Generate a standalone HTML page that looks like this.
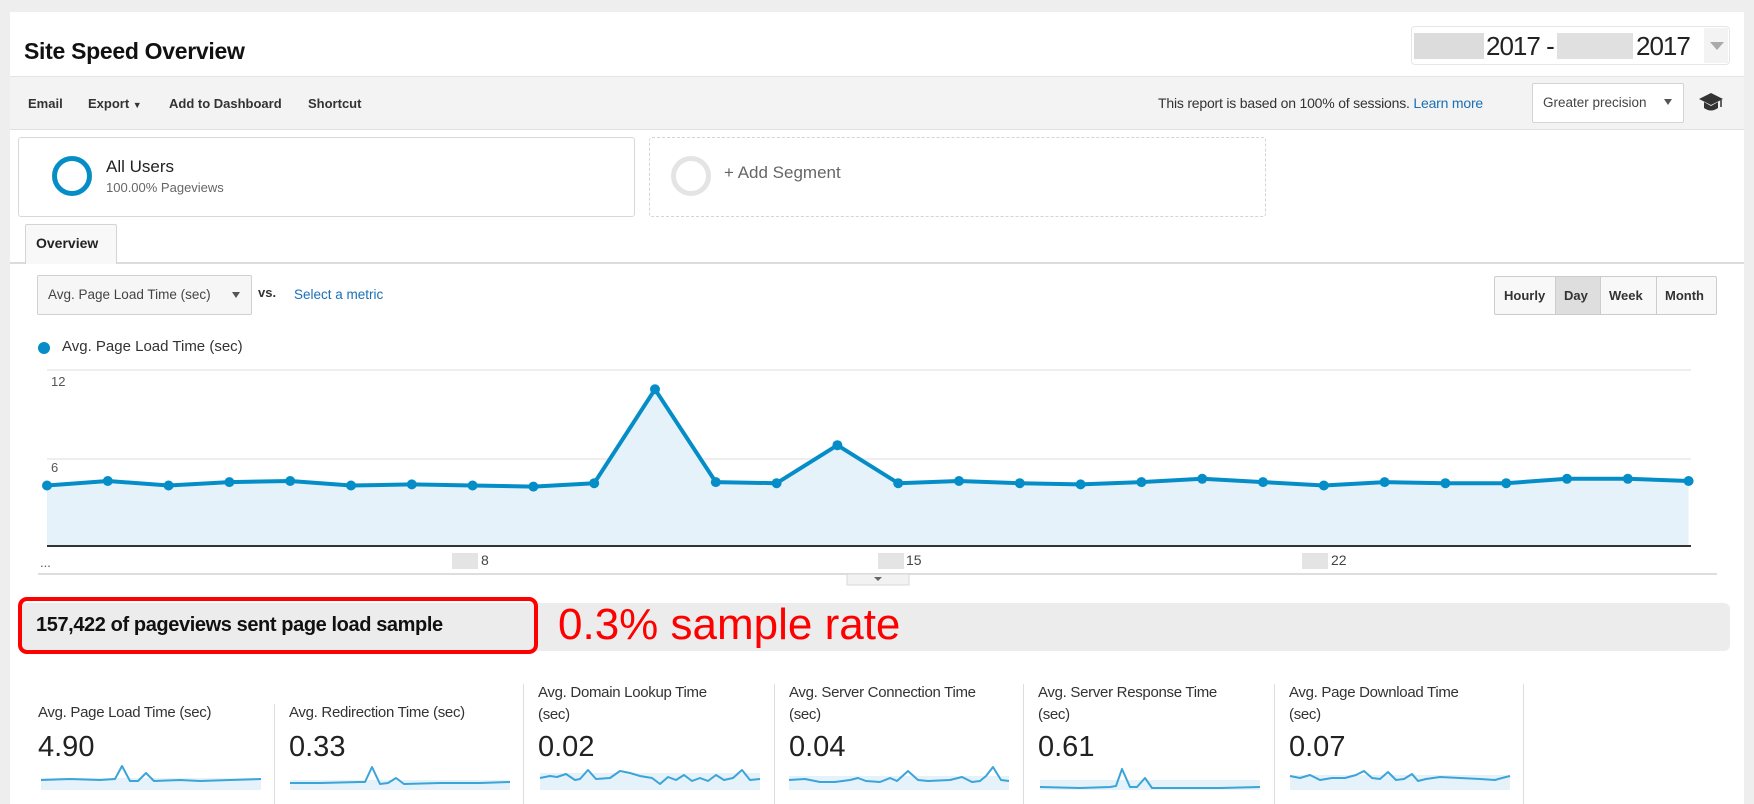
<!DOCTYPE html>
<html><head><meta charset="utf-8"><style>
*{margin:0;padding:0;box-sizing:border-box}
html,body{width:1754px;height:804px;overflow:hidden}
body{background:#eeeeee;font-family:"Liberation Sans",Arial,sans-serif;color:#222;position:relative}
.a{position:absolute;white-space:nowrap}
.panel{position:absolute;left:10px;top:12px;width:1734px;height:792px;background:#fff}
.tb{position:absolute;left:10px;top:76px;width:1734px;height:54px;background:#f3f3f3;border-top:1px solid #e4e4e4;border-bottom:1px solid #e0e0e0}
.ti{font-size:13px;font-weight:bold;color:#333;top:96px}
.lbl{font-size:15px;color:#333;line-height:22px;letter-spacing:-0.3px}
.val{font-size:29px;color:#222;top:731px}
.div{position:absolute;width:1px;background:#ddd;top:684px;height:120px}
</style></head><body>
<div class="panel"></div>
<div class="a" style="left:24px;top:38px;font-size:23px;font-weight:bold;color:#111;letter-spacing:-0.3px">Site Speed Overview</div>

<!-- date box -->
<div class="a" style="left:1411px;top:26px;width:319px;height:39px;border:1px solid #e6e6e6;border-radius:4px;background:#fff"></div>
<div class="a" style="left:1414px;top:33px;width:70px;height:26px;background:#dcdcdc"></div>
<div class="a" style="left:1557px;top:33px;width:76px;height:26px;background:#e0e0e0"></div>
<div class="a" style="left:1486px;top:31px;font-size:26px;color:#222;letter-spacing:-1px">2017 -</div>
<div class="a" style="left:1636px;top:31px;font-size:26px;color:#222;letter-spacing:-1px">2017</div>
<div class="a" style="left:1704px;top:28px;width:24px;height:35px;background:#f3f3f3"></div>
<div class="a" style="left:1710px;top:42px;border-left:7px solid transparent;border-right:7px solid transparent;border-top:8px solid #aaa"></div>

<div class="tb"></div>
<div class="a ti" style="left:28px">Email</div>
<div class="a ti" style="left:88px">Export <span style="font-size:9px">▼</span></div>
<div class="a ti" style="left:169px">Add to Dashboard</div>
<div class="a ti" style="left:308px">Shortcut</div>
<div class="a" style="left:1158px;top:95px;font-size:14px;color:#333;letter-spacing:-0.2px">This report is based on 100% of sessions. <span style="color:#1a6fb5">Learn more</span></div>
<div class="a" style="left:1532px;top:83px;width:152px;height:40px;background:#fff;border:1px solid #d4d4d4;border-radius:2px"></div>
<div class="a" style="left:1543px;top:95px;font-size:13.5px;color:#444">Greater precision</div>
<div class="a" style="left:1664px;top:99px;border-left:4px solid transparent;border-right:4px solid transparent;border-top:6px solid #555"></div>
<svg class="a" style="left:1698px;top:91px" width="26" height="24" viewBox="0 0 26 24"><path d="M1 8 L13 2 L25 8 L13 14Z" fill="#333"/><path d="M6 11 L6 17 Q13 22 20 17 L20 11 L13 15Z" fill="#333"/><path d="M23 9 L23 16" stroke="#333" stroke-width="1.5"/></svg>

<!-- segments -->
<div class="a" style="left:18px;top:137px;width:617px;height:80px;border:1px solid #d8d8d8;border-radius:3px;background:#fff"></div>
<div class="a" style="left:52px;top:156px;width:40px;height:40px;border-radius:50%;border:5px solid #058dc7"></div>
<div class="a" style="left:106px;top:157px;font-size:17px;color:#222">All Users</div>
<div class="a" style="left:106px;top:180px;font-size:13px;color:#666">100.00% Pageviews</div>
<div class="a" style="left:649px;top:137px;width:617px;height:80px;border:1px dashed #d4d4d4;border-radius:3px"></div>
<div class="a" style="left:671px;top:156px;width:40px;height:40px;border-radius:50%;border:5px solid #e4e4e4"></div>
<div class="a" style="left:724px;top:163px;font-size:17px;color:#666">+ Add Segment</div>

<!-- tab -->
<div class="a" style="left:10px;top:262px;width:1734px;height:2px;background:#dcdcdc"></div>
<div class="a" style="left:25px;top:224px;width:92px;height:40px;border:1px solid #d4d4d4;border-bottom:none;background:#f8f8f8;border-radius:2px 2px 0 0"></div>
<div class="a" style="left:36px;top:235px;font-size:14px;font-weight:bold;color:#222">Overview</div>

<!-- metric select -->
<div class="a" style="left:37px;top:275px;width:215px;height:40px;border:1px solid #d0d0d0;border-radius:2px;background:#f6f6f6"></div>
<div class="a" style="left:48px;top:287px;font-size:13.5px;color:#444">Avg. Page Load Time (sec)</div>
<div class="a" style="left:232px;top:292px;border-left:4px solid transparent;border-right:4px solid transparent;border-top:6px solid #555"></div>
<div class="a" style="left:258px;top:285px;font-size:13px;font-weight:bold;color:#333">vs.</div>
<div class="a" style="left:294px;top:287px;font-size:13.5px;color:#1a6fb5">Select a metric</div>

<!-- period buttons -->
<div class="a" style="left:1494px;top:276px;width:223px;height:39px;border:1px solid #ccc;border-radius:2px;background:#f8f8f8"></div>
<div class="a" style="left:1555px;top:277px;width:46px;height:37px;background:#dedede;border-left:1px solid #ccc;border-right:1px solid #ccc"></div>
<div class="a" style="left:1656px;top:277px;width:1px;height:37px;background:#ccc"></div>
<div class="a" style="left:1504px;top:288px;font-size:13px;font-weight:bold;color:#333">Hourly</div>
<div class="a" style="left:1564px;top:288px;font-size:13px;font-weight:bold;color:#333">Day</div>
<div class="a" style="left:1609px;top:288px;font-size:13px;font-weight:bold;color:#333">Week</div>
<div class="a" style="left:1665px;top:288px;font-size:13px;font-weight:bold;color:#333">Month</div>

<!-- legend -->
<div class="a" style="left:38px;top:342px;width:12px;height:12px;border-radius:50%;background:#058dc7"></div>
<div class="a" style="left:62px;top:338px;font-size:15px;color:#333">Avg. Page Load Time (sec)</div>
<div class="a" style="left:51px;top:374px;font-size:13px;color:#555">12</div>
<div class="a" style="left:51px;top:460px;font-size:13px;color:#555">6</div>
<div class="a" style="left:40px;top:555px;font-size:13px;color:#555">...</div>
<div class="a" style="left:452px;top:553px;width:26px;height:16px;background:#e4e4e4"></div>
<div class="a" style="left:481px;top:552px;font-size:14px;color:#444">8</div>
<div class="a" style="left:878px;top:553px;width:26px;height:16px;background:#e4e4e4"></div>
<div class="a" style="left:906px;top:552px;font-size:14px;color:#444">15</div>
<div class="a" style="left:1302px;top:553px;width:26px;height:16px;background:#e4e4e4"></div>
<div class="a" style="left:1331px;top:552px;font-size:14px;color:#444">22</div>

<svg class="a" style="left:0;top:0" width="1754" height="804">
<line x1="47" y1="370" x2="1691" y2="370" stroke="#eee" stroke-width="2"/>
<line x1="47" y1="459" x2="1691" y2="459" stroke="#eee" stroke-width="2"/>
<polygon fill="#e6f2f9" points="47,546 47,485.5 107.8,481 168.6,485.5 229.4,482.1 290.2,481 351,485.5 411.8,484.4 472.6,485.5 533.4,486.6 594.2,483.2 655,389.3 715.8,482.1 776.6,483.2 837.4,445.2 898.2,483.2 959,481 1019.8,483.2 1080.6,484.4 1141.4,482.1 1202.2,478.8 1263,482.1 1323.8,485.5 1384.6,482.1 1445.4,483.2 1506.2,483.2 1567,478.8 1627.8,478.8 1688.6,481 1688.6,546"/>
<polyline fill="none" stroke="#058dc7" stroke-width="4" stroke-linejoin="round" points="47,485.5 107.8,481 168.6,485.5 229.4,482.1 290.2,481 351,485.5 411.8,484.4 472.6,485.5 533.4,486.6 594.2,483.2 655,389.3 715.8,482.1 776.6,483.2 837.4,445.2 898.2,483.2 959,481 1019.8,483.2 1080.6,484.4 1141.4,482.1 1202.2,478.8 1263,482.1 1323.8,485.5 1384.6,482.1 1445.4,483.2 1506.2,483.2 1567,478.8 1627.8,478.8 1688.6,481"/>
<g fill="#058dc7">
<circle cx="47" cy="485.5" r="5"/><circle cx="107.8" cy="481" r="5"/><circle cx="168.6" cy="485.5" r="5"/><circle cx="229.4" cy="482.1" r="5"/><circle cx="290.2" cy="481" r="5"/><circle cx="351" cy="485.5" r="5"/><circle cx="411.8" cy="484.4" r="5"/><circle cx="472.6" cy="485.5" r="5"/><circle cx="533.4" cy="486.6" r="5"/><circle cx="594.2" cy="483.2" r="5"/><circle cx="655" cy="389.3" r="5"/><circle cx="715.8" cy="482.1" r="5"/><circle cx="776.6" cy="483.2" r="5"/><circle cx="837.4" cy="445.2" r="5"/><circle cx="898.2" cy="483.2" r="5"/><circle cx="959" cy="481" r="5"/><circle cx="1019.8" cy="483.2" r="5"/><circle cx="1080.6" cy="484.4" r="5"/><circle cx="1141.4" cy="482.1" r="5"/><circle cx="1202.2" cy="478.8" r="5"/><circle cx="1263" cy="482.1" r="5"/><circle cx="1323.8" cy="485.5" r="5"/><circle cx="1384.6" cy="482.1" r="5"/><circle cx="1445.4" cy="483.2" r="5"/><circle cx="1506.2" cy="483.2" r="5"/><circle cx="1567" cy="478.8" r="5"/><circle cx="1627.8" cy="478.8" r="5"/><circle cx="1688.6" cy="481" r="5"/>
</g>
<line x1="47" y1="546" x2="1691" y2="546" stroke="#333" stroke-width="2"/>
<line x1="38" y1="574" x2="1717" y2="574" stroke="#ddd" stroke-width="2"/>
<rect x="847" y="574" width="62" height="11" fill="#f2f2f2" stroke="#d8d8d8"/>
<path d="M874 577 L882 577 L878 581Z" fill="#666"/>
<!-- sparklines -->
<g fill="#e6f2f9" stroke="none">
<rect x="41" y="778" width="220" height="12"/><rect x="290" y="780" width="220" height="10"/><rect x="540" y="773" width="220" height="17"/><rect x="789" y="776" width="220" height="14"/><rect x="1040" y="780" width="220" height="10"/><rect x="1290" y="775" width="220" height="15"/>
</g>
<g fill="none" stroke="#3ba4d9" stroke-width="2" stroke-linejoin="round">
<polyline points="41,780 70,779 100,780 115,779 122,766 130,781 138,781 146,773 154,781 180,780 200,781 230,780 261,779"/>
<polyline points="290,783 320,783 360,782 365,782 372,767 380,784 388,783 396,778 404,784 440,783 480,783 510,782"/>
<polyline points="540,778 550,776 557,777 566,774 575,780 580,779 588,770 596,779 610,778 620,771 630,773 640,776 652,778 660,784 668,777 676,780 684,775 692,781 700,778 708,781 716,775 724,780 733,778 742,770 750,780 760,779"/>
<polyline points="789,780 805,779 820,782 835,782 850,780 858,778 866,781 880,782 890,778 897,781 908,771 918,780 928,781 950,780 962,777 972,782 980,781 986,776 993,767 1001,780 1009,781"/>
<polyline points="1040,787 1080,788 1110,787 1116,786 1122,769 1130,787 1137,787 1145,778 1152,788 1180,788 1220,788 1260,787"/>
<polyline points="1290,776 1300,778 1310,775 1320,780 1332,778 1345,778 1356,775 1364,771 1372,778 1380,779 1388,772 1396,780 1404,779 1412,774 1418,781 1426,779 1440,777 1460,778 1480,779 1495,780 1502,778 1510,776"/>
</g>
</svg>

<!-- sample bar -->
<div class="a" style="left:18px;top:603px;width:1712px;height:48px;background:#ececec;border-radius:6px"></div>
<div class="a" style="left:18px;top:597px;width:520px;height:57px;border:4px solid #ff0000;border-radius:9px"></div>
<div class="a" style="left:36px;top:614px;font-size:20px;font-weight:bold;color:#111;letter-spacing:-0.4px">157,422 of pageviews sent page load sample</div>
<div class="a" style="left:558px;top:600px;font-size:44px;color:#ff0000">0.3% sample rate</div>

<!-- metric tiles -->
<div class="div" style="left:274px;top:704px;height:100px"></div>
<div class="div" style="left:523px"></div>
<div class="div" style="left:774px"></div>
<div class="div" style="left:1023px"></div>
<div class="div" style="left:1274px"></div>
<div class="div" style="left:1523px"></div>
<div class="a lbl" style="left:38px;top:702px">Avg. Page Load Time (sec)</div>
<div class="a lbl" style="left:289px;top:702px">Avg. Redirection Time (sec)</div>
<div class="a lbl" style="left:538px;top:682px">Avg. Domain Lookup Time<br>(sec)</div>
<div class="a lbl" style="left:789px;top:682px">Avg. Server Connection Time<br>(sec)</div>
<div class="a lbl" style="left:1038px;top:682px">Avg. Server Response Time<br>(sec)</div>
<div class="a lbl" style="left:1289px;top:682px">Avg. Page Download Time<br>(sec)</div>
<div class="a val" style="left:38px">4.90</div>
<div class="a val" style="left:289px">0.33</div>
<div class="a val" style="left:538px">0.02</div>
<div class="a val" style="left:789px">0.04</div>
<div class="a val" style="left:1038px">0.61</div>
<div class="a val" style="left:1289px">0.07</div>
</body></html>
